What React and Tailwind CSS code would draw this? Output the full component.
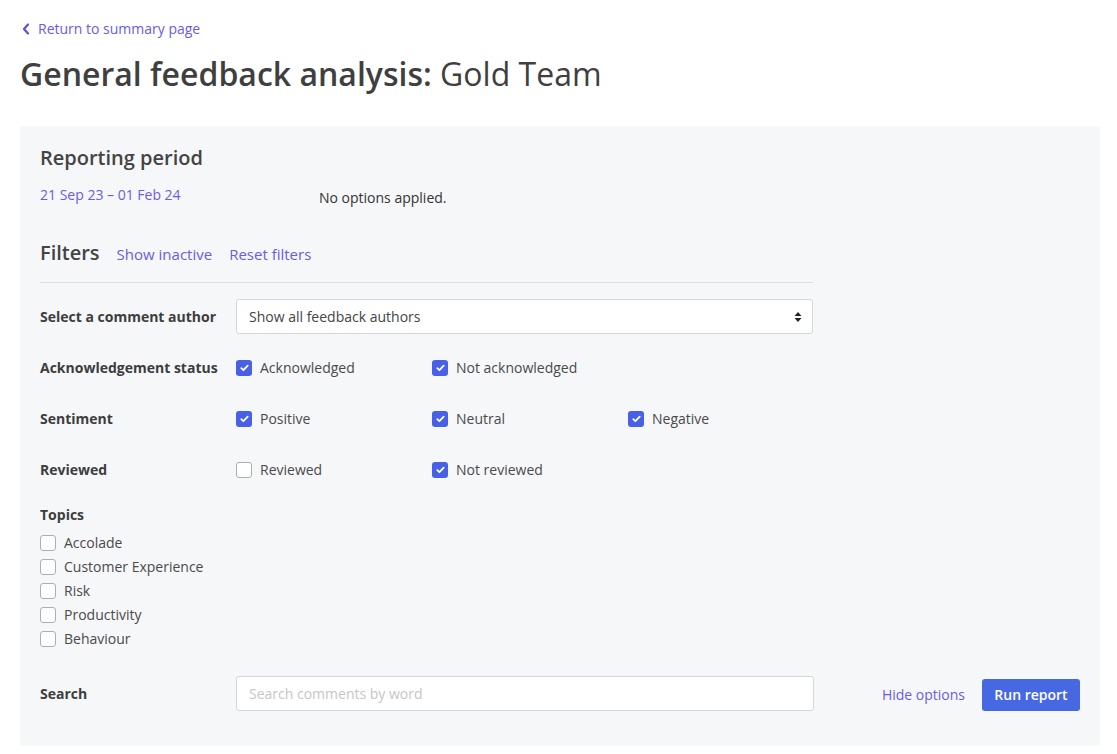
import React from "react";

const Check = ({ checked, label }) => (
  <label className="flex items-center gap-[8px] text-[14px] text-[#4a4a4a]">
    {checked ? (
      <span className="flex h-[16px] w-[16px] items-center justify-center rounded-[3px] bg-[#4760e6]">
        <svg width="9" height="8" viewBox="0 0 9 8">
          <path d="M1.3 4.2 L3.4 6.2 L7.7 1.6" fill="none" stroke="#fff" strokeWidth="1.8" strokeLinecap="round" strokeLinejoin="round" />
        </svg>
      </span>
    ) : (
      <span className="h-[16px] w-[16px] rounded-[3px] border border-[#a9adb5] bg-white" />
    )}
    <span>{label}</span>
  </label>
);

const Row = ({ label, children }) => (
  <div className="flex h-[51px] items-center">
    <div className="w-[196px] text-[14px] font-bold text-[#3d3d3d]">{label}</div>
    {children}
  </div>
);

export default function App() {
  return (
    <div className="min-h-[754px] bg-white px-[20px] pt-[18px] text-[#444]" style={{ fontFamily: '"Open Sans", sans-serif' }}>
      <a className="flex items-center gap-[8px] pl-[2px] text-[14px] text-[#6b5be6]">
        <svg width="8" height="12" viewBox="0 0 8 12">
          <path d="M6 1.5 L2 6 L6 10.5" fill="none" stroke="#5b4fe0" strokeWidth="2.2" strokeLinecap="round" strokeLinejoin="round" />
        </svg>
        <span>Return to summary page</span>
      </a>
      <h1 className="mt-[15px] text-[32px] leading-[40px] text-[#3f3f3f]">
        <span className="font-semibold">General feedback analysis:</span> Gold Team
      </h1>

      <div className="mt-[32px] w-[1080px] rounded-[3px] bg-[#f6f7f9] px-[20px] pb-[35px] pt-[18px]">
        <h2 className="text-[20px] font-semibold leading-[28px] text-[#444]">Reporting period</h2>
        <div className="mt-[13px] flex items-start text-[14px] leading-[20px]">
          <span className="w-[279px] text-[#6b5be6]">21 Sep 23 – 01 Feb 24</span>
          <span className="mt-[3px] text-[#333]">No options applied.</span>
        </div>

        <div className="mt-[31px] flex w-[773px] items-center gap-[17px] border-b border-[#dcdde0] pb-[15px]">
          <h2 className="text-[20px] font-semibold leading-[28px] text-[#444]">Filters</h2>
          <span className="mt-[2px] text-[15px] text-[#6b5be6]">Show inactive</span>
          <span className="mt-[2px] text-[15px] text-[#6b5be6]">Reset filters</span>
        </div>

        <div className="mt-[16px] flex h-[35px] w-[773px] items-center">
          <div className="w-[196px] text-[14px] font-bold text-[#3d3d3d]">Select a comment author</div>
          <div className="flex h-[35px] flex-1 items-center justify-between rounded-[3px] border border-[#d4d6da] bg-white pl-[12px] pr-[10px] text-[14px] text-[#444]">
            <span>Show all feedback authors</span>
            <svg width="8" height="12" viewBox="0 0 8 12">
              <path d="M4 1 L7.5 5 L0.5 5 Z M4 11 L7.5 7 L0.5 7 Z" fill="#222" />
            </svg>
          </div>
        </div>

        <div className="mt-[8px]">
          <Row label="Acknowledgement status">
            <div className="w-[196px]"><Check checked label="Acknowledged" /></div>
            <div className="w-[196px]"><Check checked label="Not acknowledged" /></div>
          </Row>
          <Row label="Sentiment">
            <div className="w-[196px]"><Check checked label="Positive" /></div>
            <div className="w-[196px]"><Check checked label="Neutral" /></div>
            <div className="w-[196px]"><Check checked label="Negative" /></div>
          </Row>
          <Row label="Reviewed">
            <div className="w-[196px]"><Check label="Reviewed" /></div>
            <div className="w-[196px]"><Check checked label="Not reviewed" /></div>
          </Row>
        </div>

        <div className="mt-[9px] text-[14px] font-bold text-[#3d3d3d]">Topics</div>
        <div className="mt-[7px] flex flex-col gap-[3px]">
          {["Accolade", "Customer Experience", "Risk", "Productivity", "Behaviour"].map((t) => (
            <div key={t} className="h-[21px] flex items-center"><Check label={t} /></div>
          ))}
        </div>

        <div className="mt-[27px] flex items-center">
          <div className="w-[196px] text-[14px] font-bold text-[#3d3d3d]">Search</div>
          <div className="flex h-[35px] w-[578px] items-center rounded-[3px] border border-[#d4d6da] bg-white px-[12px] text-[14px] text-[#c4c6ca]">
            Search comments by word
          </div>
          <div className="ml-auto flex items-center gap-[17px] pt-[2px]">
            <span className="text-[14px] text-[#6b5be6]">Hide options</span>
            <button className="h-[32px] w-[98px] rounded-[3px] bg-[#4768e3] text-[14px] font-semibold text-white">Run report</button>
          </div>
        </div>
      </div>
    </div>
  );
}
